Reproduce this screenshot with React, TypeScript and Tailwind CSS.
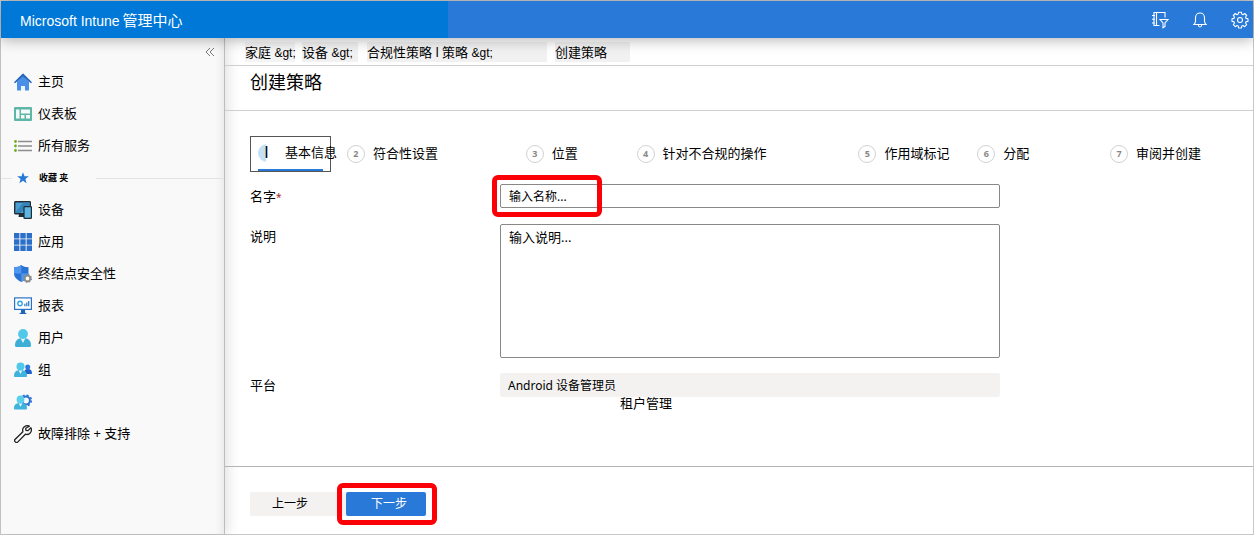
import type { ReactNode } from 'react';

type NavItem = { label: string; name?: string; icon: ReactNode };

const HomeIcon = () => (
  <svg width="18" height="18" viewBox="0 0 18 18" aria-hidden="true">
    <path d="M3 8.5 9 3l6 5.5V17a.6.6 0 0 1-.6.6H11V13H7v4.6H3.6A.6.6 0 0 1 3 17z" fill="#4a90e8" />
    <path d="M0 9.2 8.5.7a.7.7 0 0 1 1 0L18 9.2l-1 1L9 3.4l-8 6.8z" fill="#2566b8" />
    <path d="M7 13h4v4.6H7z" fill="#eef4fb" />
  </svg>
);

const DashboardIcon = () => (
  <svg width="18" height="18" viewBox="0 0 18 18" aria-hidden="true">
    <rect y="2" width="18" height="14" rx="1" fill="#5fb5a6" />
    <path d="M2 4.5h3.5v9H2zM7 4.5h9v4H7zM7 10h3.5v3.5H7zM12 10h4v3.5h-4z" fill="#f2fbf9" />
  </svg>
);

const ServicesIcon = () => (
  <svg width="18" height="18" viewBox="0 0 18 18" aria-hidden="true">
    <path d="M4 4.5h14M4 9h14M4 13.5h14" stroke="#8d8d8d" strokeWidth="1.3" />
    <circle cx="1.5" cy="4.5" r="1.4" fill="#6bb01c" />
    <circle cx="1.5" cy="9" r="1.4" fill="#6bb01c" />
    <circle cx="1.5" cy="13.5" r="1.4" fill="#6bb01c" />
  </svg>
);

const DevicesIcon = () => (
  <svg width="18" height="18" viewBox="0 0 18 18" aria-hidden="true">
    <path d="M5 13h5v3H4.5z" fill="#1d2f3d" />
    <rect x=".7" y=".7" width="15.6" height="12" rx=".6" fill="#4c9fd3" stroke="#232b33" strokeWidth="1.4" />
    <path d="M9.5 1.4h6.1v4L6 12H1.4v-1z" fill="#3685ba" />
    <rect x="10" y="5.7" width="7.4" height="11.6" rx=".6" fill="#5cb6e4" stroke="#232b33" strokeWidth="1.2" />
  </svg>
);

const AppsIcon = () => (
  <svg width="18" height="18" viewBox="0 0 18 18" aria-hidden="true">
    <path d="M0 0h5.4v5.4H0zM6.3 0h5.4v5.4H6.3zM12.6 0H18v5.4h-5.4zM0 6.3h5.4v5.4H0zM6.3 6.3h5.4v5.4H6.3zM12.6 6.3H18v5.4h-5.4zM0 12.6h5.4V18H0zM6.3 12.6h5.4V18H6.3zM12.6 12.6H18V18h-5.4z" fill="#2b6fc9" />
  </svg>
);

const ShieldIcon = () => (
  <svg width="18" height="18" viewBox="0 0 18 18" aria-hidden="true">
    <path d="M7.3 0C9 1.6 11.5 2.2 14.5 2.2v6c0 4.3-3.7 7-7.2 8.8C3.7 15.2 0 12.5 0 8.2v-6C3 2.2 5.6 1.6 7.3 0z" fill="#2a72d4" />
    <path d="M7.3 0v8.5H0V2.2C3 2.2 5.6 1.6 7.3 0zM7.3 8.5h7.2c0 4-3.7 6.7-7.2 8.5z" fill="#4f97ec" />
    <circle cx="13.5" cy="13.5" r="2.8" fill="#f9f9f9" stroke="#8a8a8a" strokeWidth="1.8" />
    <circle cx="13.5" cy="13.5" r="3.9" fill="none" stroke="#8a8a8a" strokeWidth="1.2" strokeDasharray="1.6 1.46" />
  </svg>
);

const ReportsIcon = () => (
  <svg width="18" height="18" viewBox="0 0 18 18" aria-hidden="true">
    <path d="M7 12h4v3.5l2 1.5H5l2-1.5z" fill="#1f66b8" />
    <rect x=".6" y=".9" width="16.8" height="11.5" fill="#fff" stroke="#2a72c8" strokeWidth="1.2" />
    <circle cx="6" cy="6.5" r="2.2" fill="none" stroke="#35a3e6" strokeWidth="1.4" />
    <path d="M10.3 9.2V6.8h1.2v2.4zM12.2 9.2V5.5h1.2v3.7zM14.1 9.2V4h1.2v5.2z" fill="#2a72c8" />
  </svg>
);

const UserIcon = () => (
  <svg width="18" height="18" viewBox="0 0 18 18" aria-hidden="true">
    <path d="M1 16.5C1 11.5 3.5 9 9 9s8 2.5 8 7.5c0 .8-.6 1.5-1.5 1.5h-13C1.6 18 1 17.3 1 16.5z" fill="#3daed6" />
    <path d="M6.5 9 9 14l2.5-5z" fill="#e6f7fc" />
    <circle cx="9" cy="5" r="4.9" fill="#50c8e8" />
  </svg>
);

const GroupIcon = () => (
  <svg width="18" height="18" viewBox="0 0 18 18" aria-hidden="true">
    <path d="M10 13c0-3.5 1-5 3.8-5S18 9.5 18 12.3c0 .4-.3.7-.7.7z" fill="#1f62cc" />
    <circle cx="13.7" cy="5.9" r="2.5" fill="#2d78dc" />
    <path d="M0 15c0-4 2-6 6.500-6S13 11 13 15c0 .6-.4 1-1 1H1c-.6 0-1-.4-1-1z" fill="#40b3dc" />
    <path d="M4.6 9.2 6.5 13l1.900-3.800z" fill="#e6f7fc" />
    <circle cx="6.5" cy="5.4" r="4" fill="#50c8e8" />
  </svg>
);

const TenantIcon = () => (
  <svg width="18" height="18" viewBox="0 0 18 18" aria-hidden="true">
    <circle cx="12" cy="7.5" r="3.9" fill="none" stroke="#2a72d4" strokeWidth="2" />
    <circle cx="12" cy="7.5" r="5.3" fill="none" stroke="#2a72d4" strokeWidth="1.7" strokeDasharray="2.08 2.08" />
    <path d="M0 15.5c0-4 2-5.5 6.5-5.5s6.5 1.5 6.5 5.5c0 .5-.4 1-1 1H1c-.6 0-1-.5-1-1z" fill="#40b3dc" />
    <path d="M4.6 10.2l1.9 3.6 1.9-3.6z" fill="#e6f7fc" />
    <circle cx="6.5" cy="6.5" r="3.9" fill="#5bd0ec" />
  </svg>
);

const WrenchIcon = () => (
  <svg width="18" height="18" viewBox="0 0 18 18" fill="none" stroke="#222" strokeWidth="1.3" strokeLinejoin="round" aria-hidden="true">
    <path d="M15.4 1.2A4.6 4.6 0 0 0 8.9 6.7L1.200 14.200a1.900 1.900 0 0 0 2.700 2.700l7.500-7.700a4.600 4.600 0 0 0 5.500-6.500L14 5.600l-2-.3-.3-2z" />
  </svg>
);

const StarIcon = () => (
  <svg width="12" height="12" viewBox="0 0 12 12" aria-hidden="true">
    <path d="m6 .3 1.500 4h4.300L8.400 6.900l1.200 4.300L6 8.700l-3.600 2.500 1.200-4.300L.2 4.300h4.300z" fill="#2878d8" />
  </svg>
);

const mainNav: NavItem[] = [
  { label: '主页', icon: <HomeIcon /> },
  { label: '仪表板', icon: <DashboardIcon /> },
  { label: '所有服务', icon: <ServicesIcon /> },
];

const favoritesNav: NavItem[] = [
  { label: '设备', icon: <DevicesIcon /> },
  { label: '应用', icon: <AppsIcon /> },
  { label: '终结点安全性', icon: <ShieldIcon /> },
  { label: '报表', icon: <ReportsIcon /> },
  { label: '用户', icon: <UserIcon /> },
  { label: '组', icon: <GroupIcon /> },
  { label: '', name: '租户管理', icon: <TenantIcon /> },
  { label: '故障排除 + 支持', icon: <WrenchIcon /> },
];

const steps = ['符合性设置', '位置', '针对不合规的操作', '作用域标记', '分配', '审阅并创建'];

function NavList({ items }: { items: NavItem[] }) {
  return (
    <ul>
      {items.map((item) => (
        <li key={item.label || item.name}>
          <a href="#" aria-label={item.name} className="flex h-8 items-center gap-1.5 pl-[13px]">
            {item.icon}
            {item.label}
          </a>
        </li>
      ))}
    </ul>
  );
}

function TopBar() {
  return (
    <header className="relative z-10 flex h-[37px] bg-[#2979d8] text-white shadow-[0_2px_14px_rgba(0,0,0,0.3)]">
      <div className="flex w-[447px] items-center gap-[3px] bg-[#0078d7] pl-[19px] pt-0.5">
        <span className="font-['Liberation_Sans',sans-serif] text-sm">Microsoft Intune</span>
        <span className="text-[15px]">管理中心</span>
      </div>
      <div className="ml-auto flex items-center gap-[22px] pr-1">
        <button type="button" aria-label="目录 + 订阅">
          <svg width="18" height="18" viewBox="0 0 18 18" fill="none" stroke="#fff" strokeWidth="1.1">
            <path d="M14 6.500V1.500H3V14.500h5.500M5.500 1.500V14.500M1 4.500h3M1 8.200h3M1 12h3" />
            <path d="M9 8.500h8l-3 3.500v3.500l-2 1.200V12z" />
          </svg>
        </button>
        <button type="button" aria-label="通知">
          <svg width="18" height="18" viewBox="0 0 18 18" fill="none" stroke="#fff" strokeWidth="1.1">
            <path d="M3 13.500h12c-1-1-1.500-2-1.500-3.500V6.500a4.500 4.500 0 0 0-9 0V10c0 1.500-.5 2.500-1.500 3.500zM7.300 14c.2 1.300.8 2 1.700 2s1.500-.7 1.700-2" />
          </svg>
        </button>
        <button type="button" aria-label="设置">
          <svg width="18" height="18" viewBox="0 0 18 18" fill="none" stroke="#fff" strokeWidth="1.1" strokeLinejoin="round">
            <path d="M7.600 1.200h2.800l.4 2 1.200.5 1.700-1.200 2 2-1.200 1.700.5 1.200 2 .4v2.600l-2 .4-.5 1.200 1.200 1.700-2 2-1.700-1.200-1.200.5-.4 2H7.600l-.4-2-1.200-.5-1.700 1.200-2-2L3.500 12 3 10.800l-2-.4V7.800l2-.4.5-1.200-1.200-1.700 2-2L6 3.700l1.200-.5z" />
            <circle cx="9" cy="9" r="2.500" />
          </svg>
        </button>
      </div>
    </header>
  );
}

function Sidebar() {
  return (
    <nav className="w-56 shrink-0 border-r border-[#bdbdbd] bg-[#f9f9f9] shadow-[3px_0_12px_rgba(0,0,0,0.12),inset_-8px_0_8px_-6px_rgba(0,0,0,0.08)]">
      <div className="flex h-7 items-center justify-end pr-[9px]">
        <button type="button" aria-label="折叠菜单">
          <svg width="10" height="10" viewBox="0 0 10 10" fill="none" stroke="#777" aria-hidden="true">
            <path d="M5 1 1 5l4 4M9 1 5 5l4 4" />
          </svg>
        </button>
      </div>
      <NavList items={mainNav} />
      <div className="flex h-8 items-center">
        <span className="h-px w-[11px] bg-[#e3e3e3]" />
        <span className="flex w-[84px] items-center gap-2.5 pl-[5px] text-[9px] font-bold">
          <StarIcon />
          收藏 夹
        </span>
        <span className="h-px flex-1 bg-[#e3e3e3]" />
      </div>
      <NavList items={favoritesNav} />
    </nav>
  );
}

const Separator = () => <span className="font-['Liberation_Sans',sans-serif] text-xs">&amp;gt;</span>;

function Breadcrumb() {
  return (
    <nav aria-label="breadcrumb" className="flex h-[28px] items-center border-b border-[#cfcfcf] pl-5 leading-5">
      <a href="#" className="w-[50px] whitespace-nowrap bg-[#f4f4f4]">家庭 <Separator /></a>
      <a href="#" className="ml-[7px] w-[56px] whitespace-nowrap bg-[#f1f1f1]">设备 <Separator /></a>
      <a href="#" className="ml-[9px] w-[180px] whitespace-nowrap bg-[#f1f1f1]">合规性策略 l 策略 <Separator /></a>
      <a href="#" className="ml-2 w-[75px] whitespace-nowrap bg-[#f1f1f1]">创建策略</a>
    </nav>
  );
}

function Steps() {
  return (
    <ol className="grid h-9 grid-cols-[97fr_179fr_111fr_222fr_119fr_133fr_118fr] items-center">
      <li className="h-9 w-[81px] border border-[#555]">
        <button type="button" aria-current="step" className="ml-[7px] flex h-full w-[65px] items-center gap-2.5 whitespace-nowrap border-b-2 border-[#2979d8]">
          <span className="h-[18px] w-[17px] shrink-0 rounded-l-full bg-gradient-to-r from-[#c5dff5] from-50% to-transparent to-50% text-center font-['Liberation_Sans',sans-serif] text-base leading-[18px]">
            I
          </span>
          基本信息
        </button>
      </li>
      {steps.map((label, i) => (
        <li key={label}>
          <button type="button" className="flex items-center gap-2 whitespace-nowrap">
            <span className="flex size-[18px] items-center justify-center rounded-full border border-[#d2d2d2] text-[9px] font-bold text-[#888]">
              {i + 2}
            </span>
            {label}
          </button>
        </li>
      ))}
    </ol>
  );
}

function PolicyForm() {
  return (
    <div className="mt-3 grid grid-cols-[250px_minmax(0,500px)] gap-y-[15px]">
      <label htmlFor="name" className="leading-6">
        名字<span className="text-[10px] text-[#a4262c]">*</span>
      </label>
      <div className="relative">
        <input
          id="name"
          placeholder="输入名称..."
          className="block h-6 w-full rounded-xs border border-[#8a8886] bg-white px-2 text-xs placeholder:text-black"
        />
        <span className="pointer-events-none absolute -left-2 -top-[9px] h-[42px] w-[110px] rounded-md border-[5px] border-[#fb0007]" />
      </div>

      <label htmlFor="description" className="leading-6">说明</label>
      <textarea
        id="description"
        placeholder="输入说明..."
        className="block h-[134px] w-full resize-none rounded-xs border border-[#8a8886] bg-white px-2 leading-6 placeholder:text-black"
      />

      <label htmlFor="platform" className="leading-6">平台</label>
      <div>
        <input
          id="platform"
          readOnly
          value="Android 设备管理员"
          className="block h-6 w-full rounded-xs bg-[#f3f2f1] px-2 text-xs"
        />
        <p className="pl-[120px] leading-3">租户管理</p>
      </div>
    </div>
  );
}

export default function App() {
  return (
    <div className="flex min-h-screen flex-col border border-[#c8c8c8] bg-white font-['Noto_Sans','Noto_Sans_CJK_SC',sans-serif] text-[13px] text-black">
      <TopBar />
      <div className="flex flex-1">
        <Sidebar />
        <main className="flex min-w-0 flex-1 flex-col">
          <Breadcrumb />
          <h1 className="h-[45px] border-b border-[#cfcfcf] pl-[25px] text-lg leading-8">创建策略</h1>
          <section className="flex-1 px-[25px] pt-[25px]">
            <Steps />
            <PolicyForm />
          </section>
          <footer className="flex h-[68px] border-t border-[#b5b5b5] pl-[25px] pt-[25px] text-xs">
            <button type="button" className="h-6 w-24 rounded-xs bg-[#f3f2f1] pr-4">上一步</button>
            <div className="relative">
              <button type="button" className="h-6 w-20 rounded-xs bg-[#2979d8] pl-1.5 text-white">下一步</button>
              <span className="pointer-events-none absolute -left-[9px] -top-[9px] h-[42px] w-[100px] rounded-md border-[5px] border-[#fb0007]" />
            </div>
          </footer>
        </main>
      </div>
    </div>
  );
}
